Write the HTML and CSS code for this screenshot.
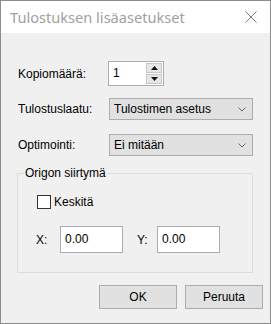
FILE: index.html
```html
<!DOCTYPE html>
<html>
<head>
<meta charset="utf-8">
<link rel="stylesheet" href="styles.css">
</head>
<body>
<div class="window">
  <div class="titlebar">
    <span class="title">Tulostuksen lisäasetukset</span>
    <svg class="close" width="12" height="12" viewBox="0 0 12 12"><path d="M0.5 0.5 L11.5 11.5 M11.5 0.5 L0.5 11.5" stroke="#7a7a7a" stroke-width="1" fill="none"/></svg>
  </div>
  <div class="content">
    <div class="row row-copies">
      <span class="label">Kopiomäärä:</span>
      <div class="spinner">
        <span class="spin-text">1</span>
        <div class="spin-btns">
          <span class="spin-btn"><svg width="7" height="4" viewBox="0 0 7 4"><path d="M3.5 0 L7 4 L0 4 Z" fill="#111"/></svg></span>
          <span class="spin-btn"><svg width="7" height="4" viewBox="0 0 7 4"><path d="M0 0 L7 0 L3.5 4 Z" fill="#111"/></svg></span>
        </div>
      </div>
    </div>
    <div class="row row-quality">
      <span class="label">Tulostuslaatu:</span>
      <div class="combo"><span>Tulostimen asetus</span><svg width="8" height="5" viewBox="0 0 8 5"><path d="M0.5 0.5 L4 4 L7.5 0.5" stroke="#666" fill="none"/></svg></div>
    </div>
    <div class="row row-opt">
      <span class="label">Optimointi:</span>
      <div class="combo"><span>Ei mitään</span><svg width="8" height="5" viewBox="0 0 8 5"><path d="M0.5 0.5 L4 4 L7.5 0.5" stroke="#666" fill="none"/></svg></div>
    </div>
    <fieldset class="group">
      <legend>Origon siirtymä</legend>
      <div class="check-row"><span class="checkbox"></span><span>Keskitä</span></div>
      <div class="xy-row">
        <span class="xy-label">X:</span>
        <span class="field">0.00</span>
        <span class="xy-label y">Y:</span>
        <span class="field">0.00</span>
      </div>
    </fieldset>
    <div class="buttons">
      <span class="btn">OK</span>
      <span class="btn">Peruuta</span>
    </div>
  </div>
</div>
</body>
</html>
```

FILE: styles.css
```css
html, body { margin: 0; padding: 0; }
body { font-family: "Liberation Sans", Arial, sans-serif; font-size: 12px; color: #000; }
.window {
  width: 271px; height: 324px; box-sizing: border-box;
  border: 1px solid #8c8c8c; background: #f0f0f0;
  display: flex; flex-direction: column;
}
.titlebar {
  height: 32px; background: #fff; display: flex; align-items: center;
  justify-content: space-between; padding: 0 13px 0 9px; flex: none;
}
.title { font-family: "Noto Sans", "Open Sans", sans-serif; font-size: 14.6px; color: #a0a0a0; margin-top: -1px; }
.close { display: block; }
.content { padding: 28px 17px 0 16px; display: flex; flex-direction: column; }
.row { display: flex; align-items: center; }
.label { width: 90px; padding-left: 1px; }
.row-quality { margin-top: 12px; }
.row-opt { margin-top: 14px; }
.spinner {
  display: flex; height: 25px; width: 56px; box-sizing: border-box;
  border: 1px solid #abadb3; background: #fff;
}
.spin-text { flex: 1; padding: 4px 0 0 4px; }
.spin-btns { width: 17px; display: flex; flex-direction: column; gap: 1px; padding: 1px 1px 1px 0; box-sizing: border-box; }
.spin-btn { flex: 1; background: #e6e6e6; border: 1px solid #c8c8c8; display: flex; align-items: center; justify-content: center; }
.spin-btn svg { display: block; }
.combo {
  width: 144px; height: 22px; box-sizing: border-box; margin-left: 1px;
  border: 1px solid #adadad; background: #e1e1e1;
  display: flex; align-items: center; justify-content: space-between;
  padding: 0 6px 0 4px;
}
.combo svg { display: block; }
.group {
  margin: 10px 0 0 0; padding: 0; border: 1px solid #dcdcdc;
  min-width: 0;
}
.group legend { margin-left: 6px; padding: 0 1px; line-height: 14px; }
.check-row { display: flex; align-items: center; margin: 15px 0 0 19px; height: 14px; }
.checkbox { width: 14px; height: 14px; box-sizing: border-box; border: 1px solid #333; background: #fff; margin-right: 3px; }
.xy-row { display: flex; align-items: center; margin: 17px 0 19px 18px; }
.xy-label { width: 24px; }
.xy-label.y { width: 20px; margin-left: 14px; }
.field {
  width: 63px; height: 27px; box-sizing: border-box; border: 1px solid #abadb3; background: #fff;
  padding: 5px 0 0 4px;
}
.buttons { display: flex; justify-content: flex-end; gap: 8px; margin: 12px -10px 0 0; }
.btn {
  width: 78px; height: 24px; box-sizing: border-box; border: 1px solid #adadad; background: #e1e1e1;
  display: flex; align-items: center; justify-content: center;
}
```
